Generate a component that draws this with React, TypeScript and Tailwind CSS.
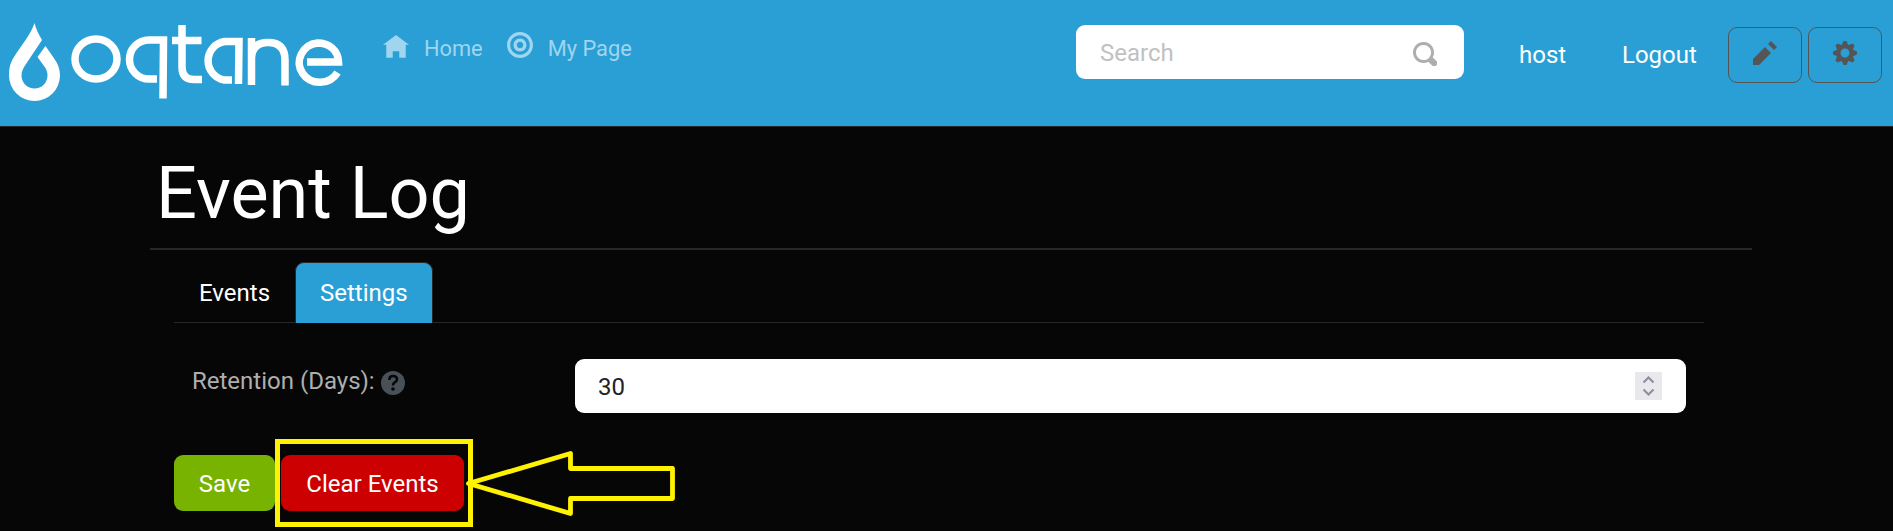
import React from 'react';

type IconProps = { d: string; className: string };

function Icon({ d, className }: IconProps) {
  return (
    <svg viewBox="0 0 8 8" fill="currentColor" className={className} aria-hidden="true">
      <path d={d} />
    </svg>
  );
}

const HOME = 'M4 0l-4 3h1v4h2v-2h2v2h2v-4.03l1 .03-4-3z';
const TARGET =
  'M4 0c-2.2 0-4 1.8-4 4s1.8 4 4 4 4-1.8 4-4-1.8-4-4-4zm0 1c1.66 0 3 1.34 3 3s-1.34 3-3 3-3-1.34-3-3 1.34-3 3-3zm0 1c-1.1 0-2 .9-2 2s.9 2 2 2 2-.9 2-2-.9-2-2-2zm0 1c.56 0 1 .44 1 1s-.44 1-1 1-1-.44-1-1 .44-1 1-1z';
const SEARCH =
  'M3.5 0c-1.93 0-3.5 1.57-3.5 3.5s1.57 3.5 3.5 3.5c.59 0 1.17-.14 1.66-.41a1 1 0 0 0 .13.13l1 1a1.02 1.02 0 1 0 1.44-1.44l-1-1a1 1 0 0 0-.16-.13c.27-.49.44-1.06.44-1.66 0-1.93-1.55-3.5-3.5-3.5zm.02 1c1.39 0 2.5 1.11 2.5 2.5 0 .66-.24 1.27-.66 1.72-.01.01-.02.02-.03.03a1 1 0 0 0-.13.13c-.44.4-1.04.63-1.69.63-1.39 0-2.5-1.11-2.5-2.5s1.11-2.5 2.5-2.5z';
const PENCIL = 'M6 0l-1 1 2 2 1-1-2-2zm-2 2l-4 4v2h2l4-4-2-2z';
const COG =
  'M3.5 0l-.5 1.19c-.1.03-.19.08-.28.13l-1.19-.5-.72.72.5 1.19c-.05.1-.09.18-.13.28l-1.19.5v1l1.19.5c.04.1.08.18.13.28l-.5 1.19.72.72 1.19-.5c.09.04.18.09.28.13l.5 1.19h1l.5-1.19c.09-.04.19-.08.28-.13l1.19.5.72-.72-.5-1.19c.04-.09.09-.19.13-.28l1.19-.5v-1l-1.19-.5c-.03-.09-.08-.19-.13-.28l.5-1.19-.72-.72-1.19.5c-.09-.04-.19-.09-.28-.13l-.5-1.19h-1zm.5 2.5c.83 0 1.5.67 1.5 1.5s-.67 1.5-1.5 1.5-1.5-.67-1.5-1.5.67-1.5 1.5-1.5z';

function Logo() {
  return (
    <svg viewBox="0 0 350 126" className="h-[126px] w-[350px] shrink-0" role="img" aria-label="oqtane">
      <path
        fill="#fff"
        d="M34.500 23C31 34 21 46 14 57C10 63 9 69 9 75.500A25.500 25.500 0 0 0 60 75.500C60 69 58 64 54.500 59L45.500 46L37.500 57L44 66C46.500 69 47.500 72 47.500 75.500A13 13 0 0 1 21.500 75.500C21.500 71 23.500 68 26 64L42 40C39 35 36 29 34.500 23Z"
      />
      <g fill="none" stroke="#fff" strokeWidth="7.500">
        <ellipse cx="96" cy="59" rx="21" ry="20" />
        <path d="M157 79H149A19.500 19.500 0 0 1 149 40H163.500L163 98.500" />
        <path d="M182 25V67Q182 79.500 194 79.500H202M172 40.500H201.500" />
        <path d="M232 80H224.500A19.500 19.500 0 0 1 224.500 41.500H239L238.500 84" />
        <path d="M251.500 85V38M251.500 58Q252 42.500 268 42.500Q285 42.500 285 60V85.500" />
        <path d="M307 62H338.500C338 50 329 43 317.500 43A20.500 19.700 0 1 0 337.500 72.500" />
      </g>
    </svg>
  );
}

export default function App() {
  return (
    <div className="relative h-[531px] w-[1893px] overflow-hidden bg-[#060606] font-['Roboto',sans-serif] text-2xl leading-9 text-white">
      <header className="flex h-[127px] items-start border-b border-[#282828] bg-[#2a9fd6]">
        <Logo />
        <nav className="flex pt-[31px] text-[21.8px] text-[#9fd5ef]">
          <a className="flex pl-[33px]">
            <Icon d={HOME} className="mt-1 mr-[15px] size-[26px]" />
            Home
          </a>
          <a className="flex pl-6">
            <Icon d={TARGET} className="mt-px mr-[15px] size-[26px]" />
            My Page
          </a>
        </nav>
        <div className="ml-auto flex pr-[11px]">
          <div className="mt-[25px] mr-[55px] flex h-[54px] w-[388px] items-center justify-between rounded-[9px] bg-white pr-[27px] pl-6 text-[#c1c1c1]">
            <span className="pt-0.5">Search</span>
            <Icon d={SEARCH} className="mt-1 size-6 text-[#adafae]" />
          </div>
          <a className="mt-[37px] w-[103px]">host</a>
          <a className="mt-[37px] w-[106px]">Logout</a>
          <div className="mt-[27px] flex gap-1.5 text-[#555]">
            <button className="flex h-14 w-[74px] justify-center rounded-[9px] border border-[#555] pt-[13px]">
              <Icon d={PENCIL} className="size-6" />
            </button>
            <button className="flex h-14 w-[74px] justify-center rounded-[9px] border border-[#555] pt-[13px]">
              <Icon d={COG} className="size-6" />
            </button>
          </div>
        </div>
      </header>
      <main className="ml-[150px] w-[1602px]">
        <h1 className="h-[123px] border-b-2 border-[#282828] pt-6 pl-1.5 text-[72px] leading-[86px]">Event Log</h1>
        <div className="mx-6 mt-3 w-[1530px]">
          <div className="flex h-[61px] border-b border-[#282828]">
            <a className="w-[121px] pt-[13px] pl-[25px]">Events</a>
            <a className="h-[61px] w-[138px] rounded-t-[9px] border border-b-0 border-[#282828] bg-[#2a9fd6] pt-3 pl-6">
              Settings
            </a>
          </div>
          <div className="flex pt-9 pl-[18px]">
            <label className="flex w-[383px] pt-1 text-[#adafae]">
              Retention (Days):
              <svg viewBox="0 0 24 24" className="mt-2 ml-1.5 size-6">
                <circle cx="12" cy="12" r="12" fill="#495057" />
                <path d="M8.300 9Q8.300 5 12 5Q16 5 16 8.300Q16 10.500 13.500 11.500Q12 12.300 12 14.500" fill="none" stroke="#060606" strokeWidth="2.500" />
                <circle cx="12" cy="18" r="1.800" fill="#060606" />
              </svg>
            </label>
            <div className="flex h-[54px] w-[1111px] items-center justify-between rounded-[9px] bg-white pr-6 pl-[23px] text-[#222]">
              <span className="pt-0.5">30</span>
              <svg viewBox="0 0 27 28" className="h-7 w-[27px] bg-[#e9e9ed]" fill="none" stroke="#8f8f9d" strokeWidth="2.200">
                <path d="M8.500 10.500L13.500 5.500L18.500 10.500M8.500 17.500L13.500 22.500L18.500 17.500" />
              </svg>
            </div>
          </div>
          <div className="flex gap-1.5 pt-[42px]">
            <button className="h-14 w-[101px] rounded-[9px] bg-[#77b300] pt-0.5">Save</button>
            <button className="h-14 w-[183px] rounded-[9px] bg-[#c00] pt-0.5">Clear Events</button>
          </div>
        </div>
      </main>
      <svg
        viewBox="0 0 405 94"
        className="absolute top-[437px] left-[273px] h-[94px] w-[405px]"
        fill="none"
        stroke="#fff200"
        strokeWidth="5"
      >
        <rect x="4.500" y="4.500" width="193" height="83" />
        <path strokeWidth="4.800" strokeLinejoin="round" d="M195.500 46.500L297.500 16.500V31.500H399.500V61.500H297.500V76.500Z" />
      </svg>
    </div>
  );
}
